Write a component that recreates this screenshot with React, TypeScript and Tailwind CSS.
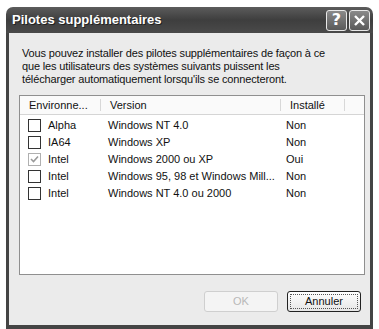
const rows = [
  { env: "Alpha", version: "Windows NT 4.0", installed: "Non", checked: false },
  { env: "IA64", version: "Windows XP", installed: "Non", checked: false },
  { env: "Intel", version: "Windows 2000 ou XP", installed: "Oui", checked: true },
  { env: "Intel", version: "Windows 95, 98 et Windows Mill...", installed: "Non", checked: false },
  { env: "Intel", version: "Windows NT 4.0 ou 2000", installed: "Non", checked: false },
];

function CheckBox({ checked }: { checked: boolean }) {
  return (
    <span
      className={
        "w-[13px] h-[13px] border flex items-center justify-center bg-white " +
        (checked ? "border-[#b0b0b0]" : "border-[#333]")
      }
    >
      {checked && (
        <svg width="9" height="9" viewBox="0 0 9 9">
          <path d="M1 4 L3.5 6.5 L8 1.5" stroke="#9a9a9a" strokeWidth="1.6" fill="none" />
        </svg>
      )}
    </span>
  );
}

function TitleButton({ children }: { children: React.ReactNode }) {
  return (
    <div className="w-[21px] h-[21px] rounded-[3px] border border-[#e8e8e8] bg-gradient-to-b from-[#8a8a8a] to-[#5a5a5a] flex items-center justify-center">
      {children}
    </div>
  );
}

export default function App() {
  return (
    <div className="w-[379px] h-[329px] bg-white pt-[7px] pl-[6px] pr-[6px]" style={{ fontFamily: '"Liberation Sans", Arial, sans-serif' }}>
      <div className="w-[367px] h-[322px] flex flex-col">
        <div className="h-[26px] rounded-t-[7px] bg-gradient-to-b from-[#5c5c5c] via-[#3e3e3e] to-[#4a4a4a] flex items-center pl-[6px] pr-[3px]">
          <span className="text-white font-bold text-[13px] flex-1" style={{ textShadow: "1px 1px #222" }}>
            Pilotes supplémentaires
          </span>
          <div className="flex gap-[2px]">
            <TitleButton>
              <span className="text-white font-bold text-[16px] leading-none" style={{ fontFamily: '"DejaVu Sans", sans-serif' }}>?</span>
            </TitleButton>
            <TitleButton>
              <svg width="13" height="13" viewBox="0 0 13 13">
                <path d="M2 2 L11 11 M11 2 L2 11" stroke="white" strokeWidth="2.4" />
              </svg>
            </TitleButton>
          </div>
        </div>
        <div className="flex-1 bg-[#ebebeb] border-l-[3px] border-r-[3px] border-b-[4px] border-[#444] flex flex-col pl-[10px] pr-[8px]">
          <p className="text-[11px] leading-[13px] text-[#111] mt-[14px] ml-[3px] tracking-[-0.15px]">
            Vous pouvez installer des pilotes supplémentaires de façon à ce
            <br />
            que les utilisateurs des systèmes suivants puissent les
            <br />
            télécharger automatiquement lorsqu'ils se connecteront.
          </p>
          <div className="mt-[9px] w-[346px] h-[180px] bg-white border border-[#8f8f8f] text-[11px] text-[#111]">
            <div className="h-[19px] flex items-stretch border-b border-[#d5d5d5] bg-[#fafafa]">
              <div className="w-[81px] flex items-center pl-[9px] border-r border-[#d8d8d8] my-[3px]">Environne...</div>
              <div className="w-[180px] flex items-center pl-[9px] border-r border-[#d8d8d8] my-[3px]">Version</div>
              <div className="w-[64px] flex items-center pl-[9px] border-r border-[#d8d8d8] my-[3px]">Installé</div>
            </div>
            <div className="pt-[2px]">
              {rows.map((r, i) => (
                <div key={i} className="h-[17px] flex items-center">
                  <div className="w-[88px] flex items-center pl-[8px] gap-[7px]">
                    <CheckBox checked={r.checked} />
                    <span>{r.env}</span>
                  </div>
                  <div className="w-[178px]">{r.version}</div>
                  <div>{r.installed}</div>
                </div>
              ))}
            </div>
          </div>
          <div className="flex justify-end gap-[9px] mt-[16px] mr-[1px]">
            <button className="w-[74px] h-[21px] rounded-[3px] border border-[#cfcfcf] bg-[#f4f4f4] text-[11px] text-[#b8b8b8]">OK</button>
            <button className="w-[74px] h-[21px] rounded-[3px] border border-[#222] bg-gradient-to-b from-white to-[#e6e6e6] text-[11px] text-[#111] p-[2px]">
              <span className="block w-full h-full border border-dotted border-[#555] leading-[13px]">Annuler</span>
            </button>
          </div>
        </div>
      </div>
    </div>
  );
}
